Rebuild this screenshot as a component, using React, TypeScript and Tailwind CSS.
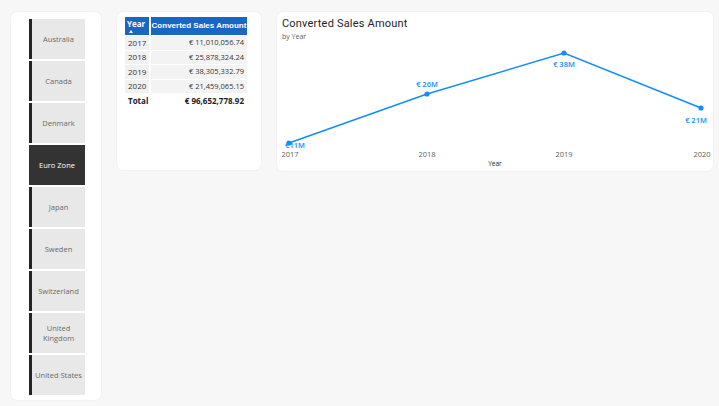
const countries = [
  'Australia',
  'Canada',
  'Denmark',
  'Euro Zone',
  'Japan',
  'Sweden',
  'Switzerland',
  'United Kingdom',
  'United States',
];

const rows = [
  { year: '2017', amount: '€ 11,010,056.74' },
  { year: '2018', amount: '€ 25,878,324.24' },
  { year: '2019', amount: '€ 38,305,332.79' },
  { year: '2020', amount: '€ 21,459,065.15' },
];

const font = { fontFamily: '"Open Sans", "Noto Sans", Arial, sans-serif' };

function Slicer() {
  return (
    <div className="w-[90px] h-[388px] bg-white rounded-md shadow-[0_0_2px_rgba(0,0,0,0.08)] pl-[18px] pt-[7px] flex flex-col gap-[2px]">
      {countries.map((c) => {
        const active = c === 'Euro Zone';
        return (
          <div
            key={c}
            className={
              active
                ? 'w-[56px] h-[40px] bg-[#333333] flex items-center justify-center text-[7.5px] text-white text-center leading-[10px]'
                : 'w-[56px] h-[40px] bg-[#e8e8e8] border-l-[3px] border-[#252423] flex items-center justify-center text-[7.5px] text-[#6b6967] text-center leading-[10px] px-[3px]'
            }
          >
            {c}
          </div>
        );
      })}
    </div>
  );
}

function SalesTable() {
  return (
    <div className="w-[144px] h-[158px] bg-white rounded-md shadow-[0_0_2px_rgba(0,0,0,0.08)] pl-[8px] pt-[5px]">
      <div className="w-[122px] text-[8px]">
        <div className="flex gap-[2px] h-[18px] bg-white">
          <div className="w-[24px] bg-[#1a66c2] text-white font-bold px-[2px] leading-[9px] pt-[2px] flex flex-col">
            <span>Year</span>
            {/* sort arrow */}
            <span className="mt-[2px] ml-[2px] w-0 h-0 border-l-[2.5px] border-r-[2.5px] border-b-[3px] border-l-transparent border-r-transparent border-b-white" />
          </div>
          <div
            className="flex-1 bg-[#1a66c2] text-white font-bold text-[8px] px-[2px] flex items-center justify-center whitespace-nowrap overflow-hidden"
            style={{ fontFamily: '"Liberation Sans", Arial, sans-serif' }}
          >
            Converted Sales Amount
          </div>
        </div>
        {rows.map((r) => (
          <div key={r.year} className="flex gap-[2px] h-[13.5px] mt-[1px] text-[#333]">
            <div className="w-[24px] bg-[#f1f1f1] px-[3px] overflow-hidden whitespace-nowrap flex items-center">{r.year}</div>
            <div className="flex-1 bg-[#f3f3f3] px-[3px] flex items-center justify-end text-[7.5px]">{r.amount}</div>
          </div>
        ))}
        <div className="flex gap-[2px] h-[14px] mt-[1px] font-bold text-[#222]">
          <div className="w-[24px] px-[3px] flex items-center">Total</div>
          <div className="flex-1 px-[3px] flex items-center justify-end">€ 96,652,778.92</div>
        </div>
      </div>
    </div>
  );
}

function LineChart() {
  const pts: [number, number][] = [
    [12, 131],
    [150, 82],
    [287, 41],
    [424, 96],
  ];
  return (
    <div className="w-[436px] h-[159px] bg-white rounded-md shadow-[0_0_2px_rgba(0,0,0,0.08)] relative overflow-hidden">
      <div className="pl-[5px] pt-[5px]">
        <div className="text-[11px] text-[#252423] leading-[14px] tracking-[0.2px]" style={{ fontFamily: 'Roboto, "Noto Sans", sans-serif' }}>
          Converted Sales Amount
        </div>
        <div className="text-[7px] text-[#605e5c] leading-[10px] mt-[1px]">by Year</div>
      </div>
      <svg className="absolute left-0 top-0" width="436" height="159" viewBox="0 0 436 159">
        <polyline
          points={pts.map((p) => p.join(',')).join(' ')}
          fill="none"
          stroke="#118dff"
          strokeWidth="1.5"
        />
        {pts.map((p, i) => (
          <circle key={i} cx={p[0]} cy={p[1]} r="2.6" fill="#118dff" />
        ))}
        <g fill="#118dff" fontSize="7.5" fontWeight="600" fontFamily='"Open Sans", "Noto Sans", sans-serif'>
          <text x="18" y="136" textAnchor="middle">€11M</text>
          <text x="150" y="75" textAnchor="middle">€ 26M</text>
          <text x="287" y="55" textAnchor="middle">€ 38M</text>
          <text x="419" y="111" textAnchor="middle">€ 21M</text>
        </g>
        <g fill="#605e5c" fontSize="7.5" fontFamily='"Open Sans", "Noto Sans", sans-serif'>
          <text x="13" y="145" textAnchor="middle">2017</text>
          <text x="150" y="145" textAnchor="middle">2018</text>
          <text x="287" y="145" textAnchor="middle">2019</text>
          <text x="425" y="145" textAnchor="middle">2020</text>
          <text x="218" y="154" textAnchor="middle" fontSize="6.5" fill="#252423">Year</text>
        </g>
      </svg>
    </div>
  );
}

export default function App() {
  return (
    <div className="w-[719px] h-[406px] bg-[#f7f7f7] flex items-start pl-[11px] pt-[12px] overflow-hidden" style={font}>
      <Slicer />
      <div className="ml-[16px]">
        <SalesTable />
      </div>
      <div className="ml-[16px]">
        <LineChart />
      </div>
    </div>
  );
}
